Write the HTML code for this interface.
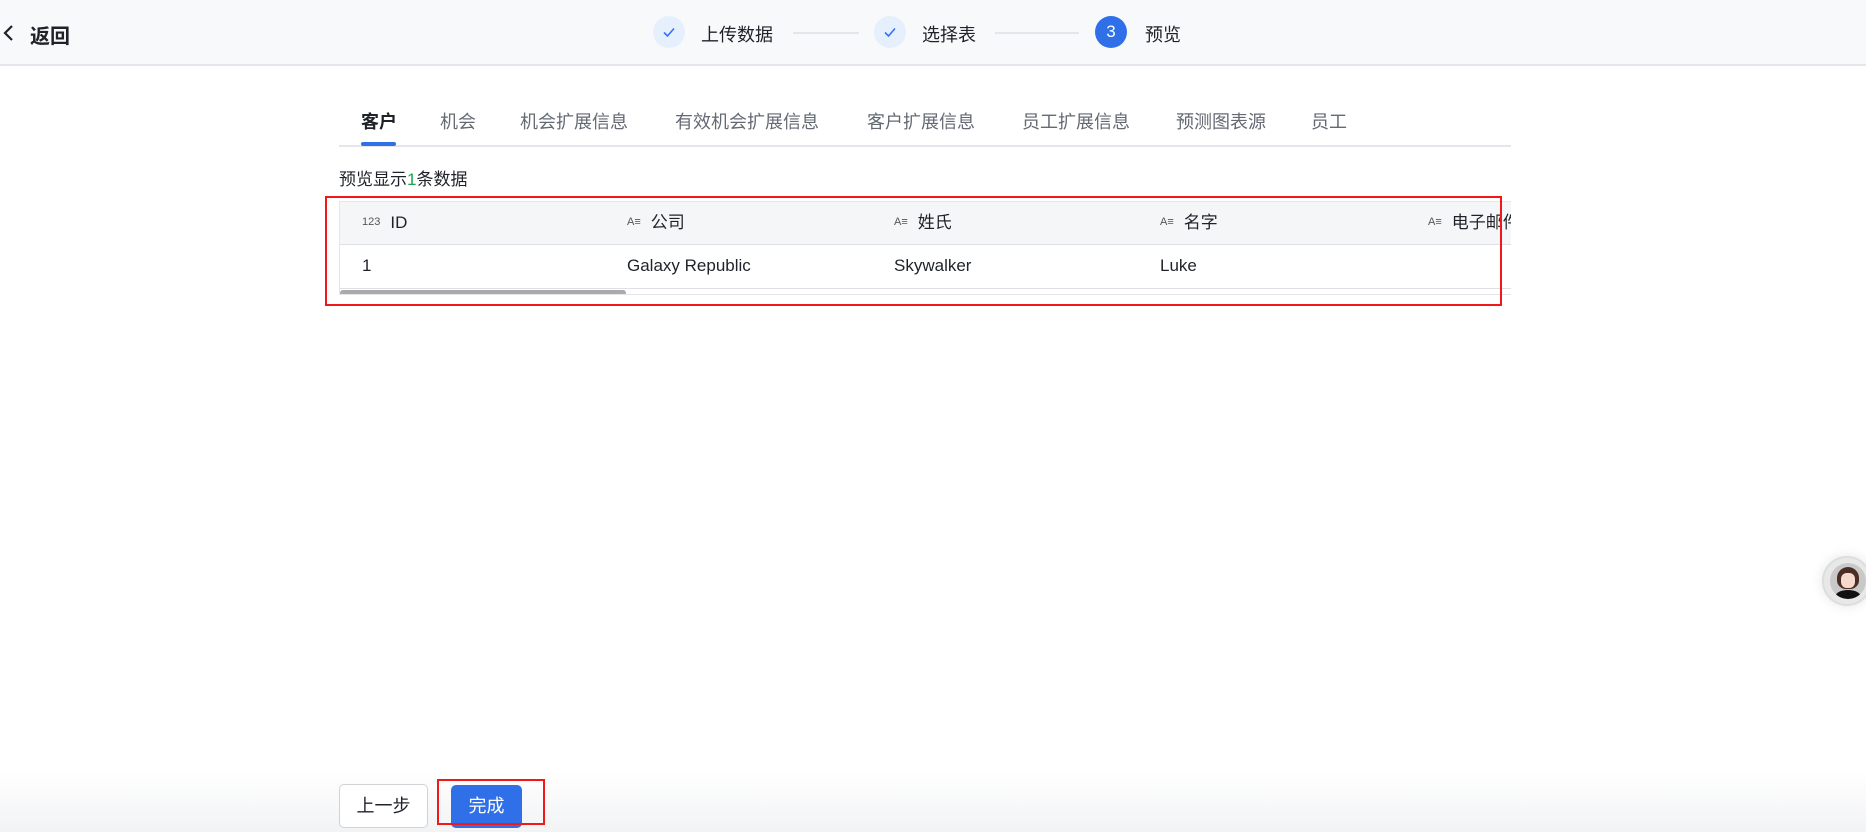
<!DOCTYPE html>
<html><head><meta charset="utf-8"><style>
*{margin:0;padding:0;box-sizing:border-box}
body{width:1866px;height:832px;overflow:hidden;background:#fff;position:relative;font-family:"Liberation Sans","Noto Sans CJK SC",sans-serif;color:#1f2329}
.a{position:absolute;white-space:nowrap}
.hdr{position:absolute;left:0;top:0;width:1866px;height:66px;background:#f8f9fb;border-bottom:2px solid #e4e6eb}
.circ{position:absolute;width:32px;height:32px;border-radius:50%;top:16px;background:#e6f0fd;color:#3370ff;font-size:17px;text-align:center;line-height:32px}
.line{position:absolute;top:32px;height:2px;background:#e4e6eb}
.tab{position:absolute;top:108px;font-size:18px;color:#646a73;white-space:nowrap}
.th{position:absolute;top:211px;height:24px;line-height:24px;font-size:17px;color:#1f2329;white-space:nowrap;overflow:hidden}
.ic{display:inline-block;font-size:11px;color:#555;margin-right:10px;vertical-align:top;line-height:22px}
.td{position:absolute;top:256px;font-size:17px;white-space:nowrap}
</style></head><body>
<div class="hdr"></div>
<svg class="a" style="left:2px;top:24px" width="14" height="18" viewBox="0 0 14 18"><path d="M10 2 L3 9 L10 16" stroke="#1f2329" stroke-width="2.2" fill="none"/></svg>
<div class="a" style="left:30px;top:20px;font-size:20px;font-weight:bold">返回</div>
<div class="circ" style="left:653px"><svg width="32" height="32" viewBox="0 0 32 32"><path d="M11 16.5 L14.5 20 L21 12.5" stroke="#3370ff" stroke-width="1.6" fill="none"/></svg></div>
<div class="a" style="left:701px;top:21px;font-size:18px">上传数据</div>
<div class="line" style="left:793px;width:66px"></div>
<div class="circ" style="left:874px"><svg width="32" height="32" viewBox="0 0 32 32"><path d="M11 16.5 L14.5 20 L21 12.5" stroke="#3370ff" stroke-width="1.6" fill="none"/></svg></div>
<div class="a" style="left:922px;top:21px;font-size:18px">选择表</div>
<div class="line" style="left:995px;width:84px"></div>
<div class="circ" style="left:1095px;background:#2f6fe8;color:#fff">3</div>
<div class="a" style="left:1145px;top:21px;font-size:18px">预览</div>

<div class="tab" style="left:361px;color:#1f2329;font-weight:bold">客户</div>
<div class="tab" style="left:440px">机会</div>
<div class="tab" style="left:520px">机会扩展信息</div>
<div class="tab" style="left:675px">有效机会扩展信息</div>
<div class="tab" style="left:867px">客户扩展信息</div>
<div class="tab" style="left:1022px">员工扩展信息</div>
<div class="tab" style="left:1176px">预测图表源</div>
<div class="tab" style="left:1311px">员工</div>
<div class="a" style="left:339px;top:145px;width:1172px;height:2px;background:#e4e6eb"></div>
<div class="a" style="left:361px;top:142px;width:35px;height:4px;border-radius:2px;background:#2f6fe8"></div>

<div class="a" style="left:339px;top:165px;font-size:17px">预览显示<span style="color:#1ca34b">1</span>条数据</div>

<div class="a" style="left:339px;top:201px;width:1172px;height:94px;border:1px solid #e4e6eb;border-right:none;overflow:hidden">
<div class="a" style="left:0;top:0;width:1172px;height:43px;background:#f5f6f8;border-bottom:1px solid #dee0e3"></div>
<div class="a" style="left:0;top:86px;width:1172px;height:1px;background:#dee0e3"></div>
<div class="a" style="left:0;top:88px;width:286px;height:6px;border-radius:3px;background:#aaa"></div>
</div>
<div class="th" style="left:362px"><span class="ic">123</span>ID</div>
<div class="th" style="left:627px"><span class="ic">A≡</span>公司</div>
<div class="th" style="left:894px"><span class="ic">A≡</span>姓氏</div>
<div class="th" style="left:1160px"><span class="ic">A≡</span>名字</div>
<div class="th" style="left:1428px;width:83px"><span class="ic">A≡</span>电子邮件</div>
<div class="td" style="left:362px">1</div>
<div class="td" style="left:627px">Galaxy Republic</div>
<div class="td" style="left:894px">Skywalker</div>
<div class="td" style="left:1160px">Luke</div>

<div class="a" style="left:325px;top:196px;width:1177px;height:110px;border:2px solid #f01818"></div>

<div class="a" style="left:0;top:770px;width:1866px;height:62px;background:linear-gradient(#fff,#f2f3f5)"></div>
<div class="a" style="left:339px;top:784px;width:89px;height:44px;border:1px solid #d0d3d6;border-radius:5px;background:#fff;font-size:18px;text-align:center;line-height:42px">上一步</div>
<div class="a" style="left:451px;top:785px;width:71px;height:43px;border-radius:5px;background:#2f6fe8;color:#fff;font-size:18px;text-align:center;line-height:43px">完成</div>
<div class="a" style="left:437px;top:779px;width:108px;height:46px;border:2px solid #f01818"></div>

<div class="a" style="left:1822px;top:556px;width:50px;height:50px;border-radius:50%;background:#e8e8e8;border:2px solid #ddd;box-shadow:0 0 12px rgba(0,0,0,.1)"></div>
<div class="a" style="left:1830px;top:563px;width:36px;height:36px;border-radius:50%;background:#c9c9c9;overflow:hidden">
<div class="a" style="left:7px;top:4px;width:22px;height:22px;border-radius:50% 50% 40% 40%;background:#4a2e24"></div>
<div class="a" style="left:11px;top:10px;width:14px;height:15px;border-radius:40%;background:#f6d8cc"></div>
<div class="a" style="left:5px;top:27px;width:26px;height:14px;border-radius:50%;background:#111"></div>
</div>
</body></html>
